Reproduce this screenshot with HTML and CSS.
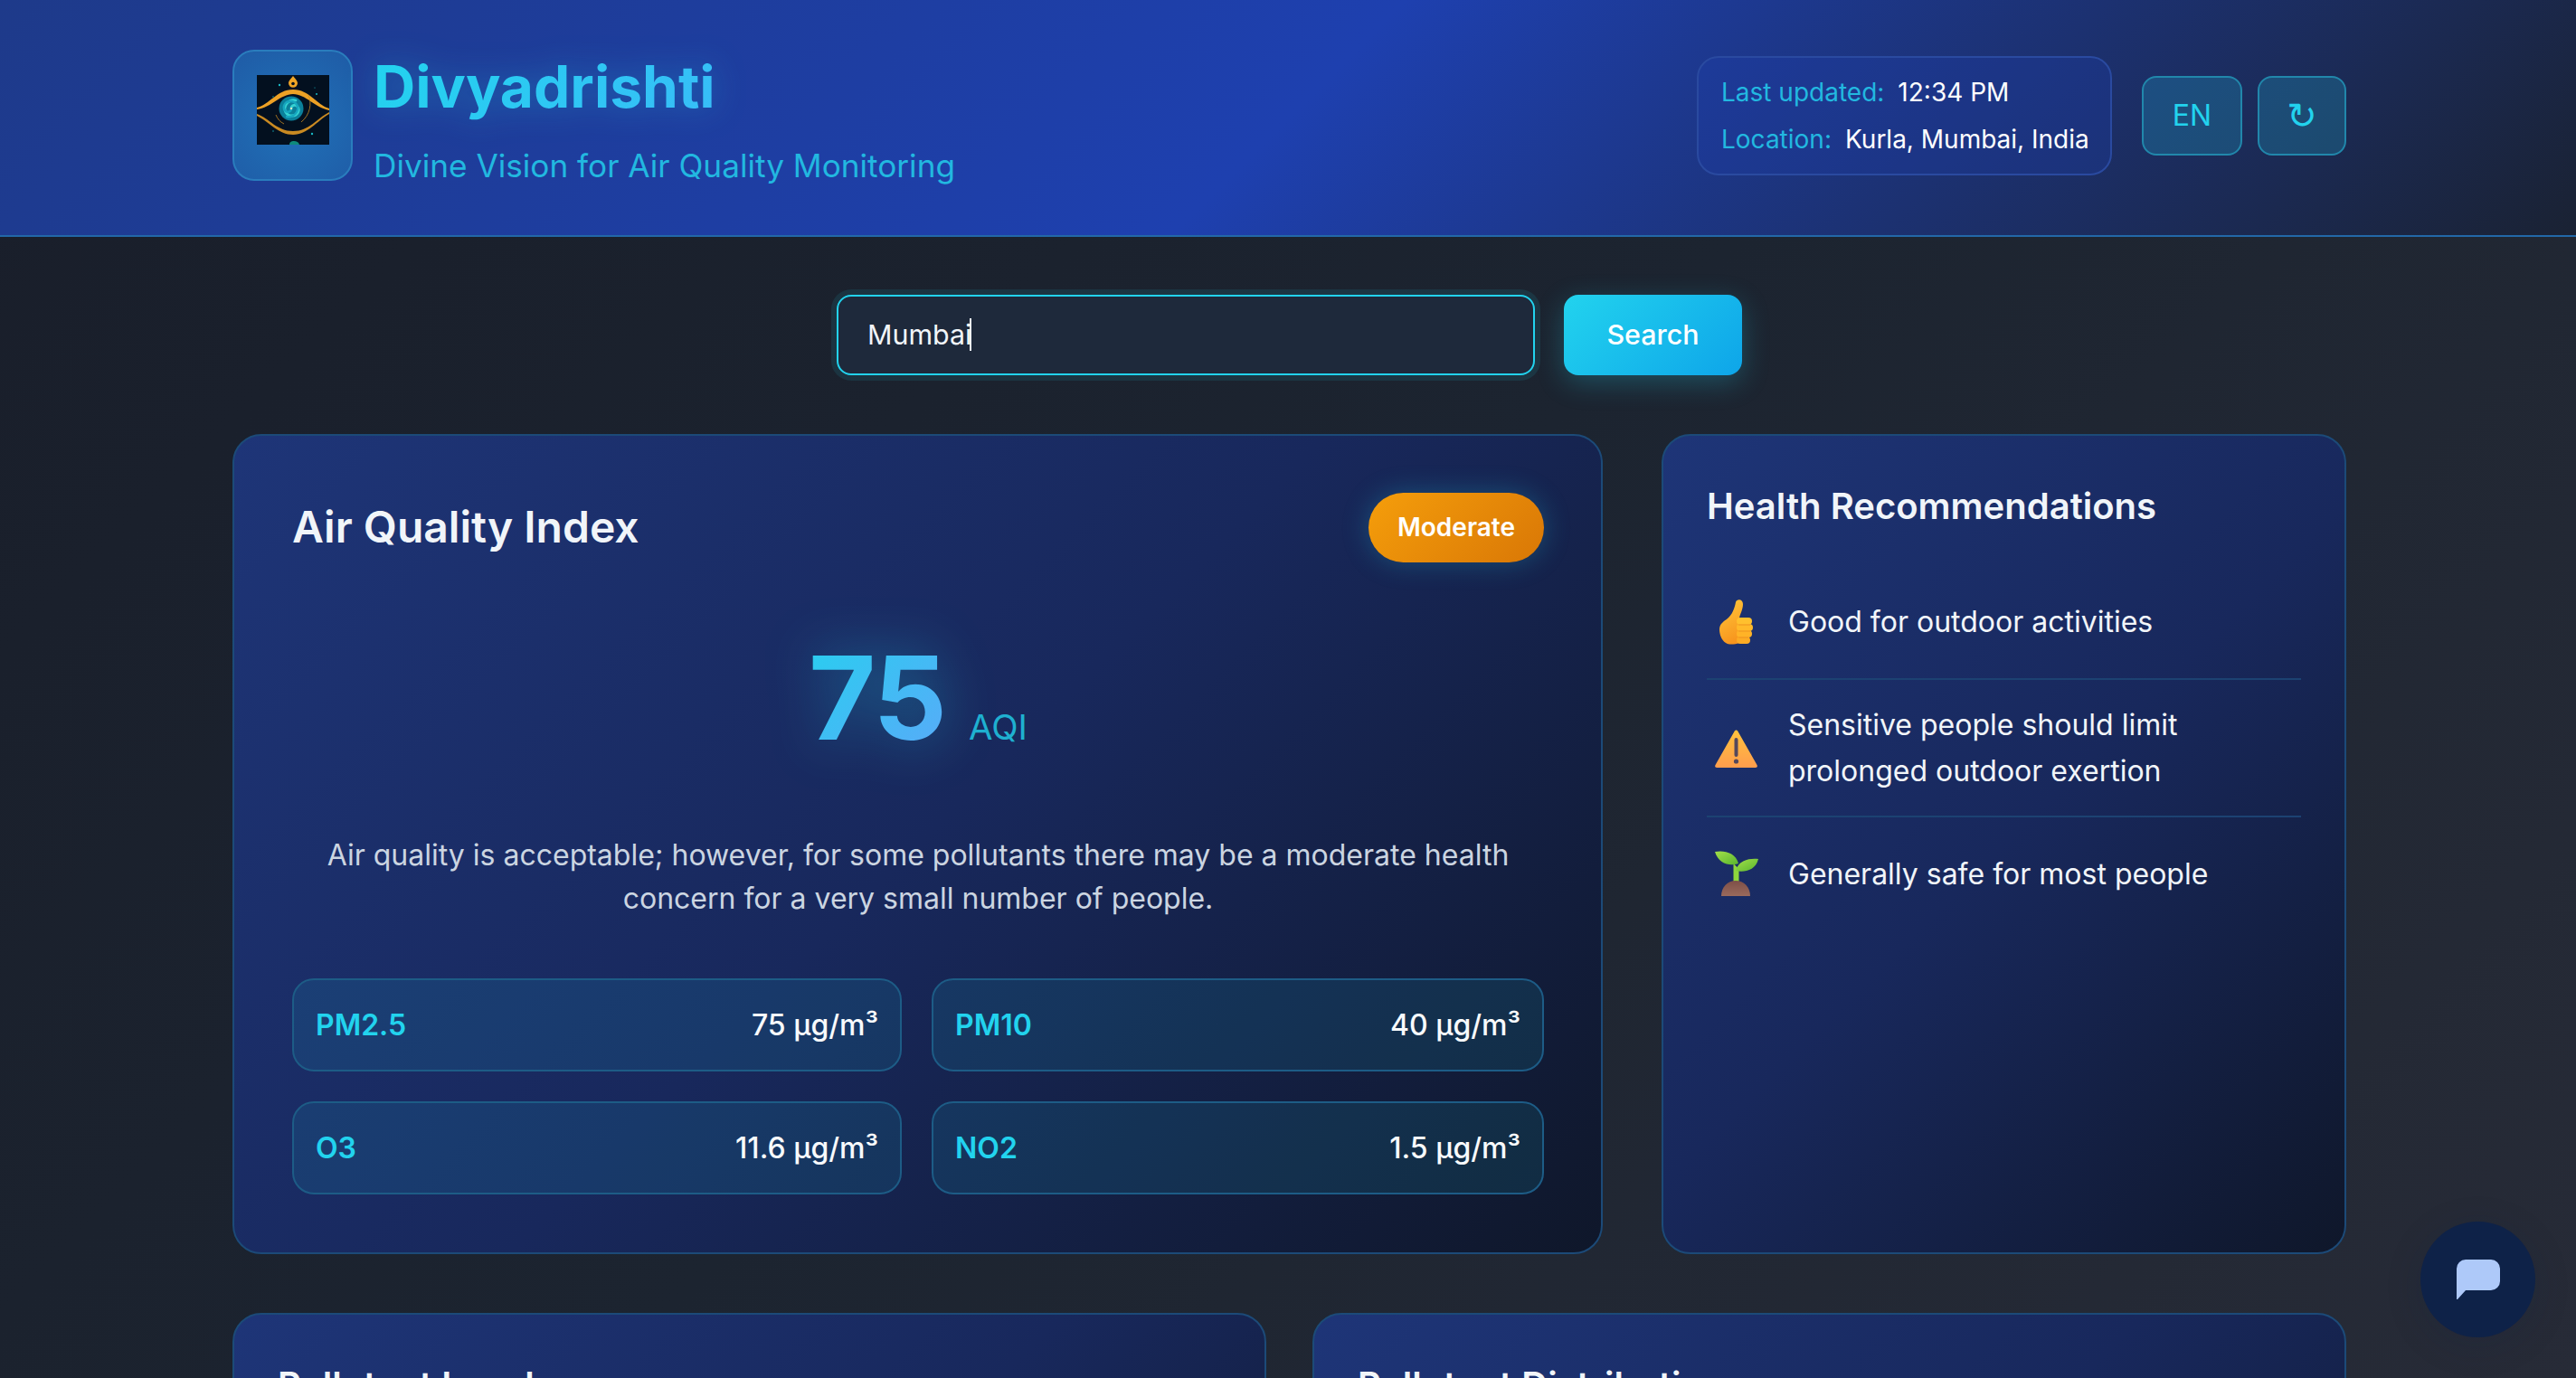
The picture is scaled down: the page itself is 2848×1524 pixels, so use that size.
FILE: index.html
```html
<!DOCTYPE html>
<html lang="en">
<head>
  <meta charset="UTF-8" />
  <title>Divyadrishti</title>
  <link rel="stylesheet" href="styles.css">
</head>
<body>
<header class="site-header">
  <div class="header-inner">
    <div class="brand">
      <div class="logo-box">
        <svg class="logo" viewBox="0 0 80 77" width="80" height="77" role="img" aria-label="Divyadrishti logo">
          <rect width="80" height="77" fill="#03101f"/>
          <g fill="#19b8c4">
            <circle cx="25" cy="11" r="1.200"/><circle cx="66" cy="21" r="1"/><circle cx="61" cy="65" r="1.200"/>
            <circle cx="18" cy="24" r=".7"/><circle cx="64" cy="14" r=".6"/><circle cx="18" cy="62" r=".7"/>
            <path d="M36 77c0-3 2-4 5-4s5 1 6 4z" fill="#0f8a7c"/>
          </g>
          <path d="M40 1c2 3 5 5 5 8a5 4.800 0 0 1-10 0c0-3 3-5 5-8z" fill="#f0a526"/>
          <circle cx="40" cy="9.500" r="1.800" fill="#03101f"/>
          <path d="M0 36C14 33 22 16 40 16s26 17 40 21v2C64 36 54 21 40 21S16 36 0 38z" fill="#eda125"/>
          <path d="M0 43C14 48 22 62 40 62s26-14 40-21v2C66 51 56 66 40 66S14 52 0 45z" fill="#c98a22"/>
          <circle cx="38" cy="37" r="13.500" fill="#0b7f9a"/>
          <g fill="none" stroke-linecap="round">
            <path d="M38 37c0-4 5-5 7-2 3 4 0 10-6 10-7 0-10-7-7-12 2-4 7-6 11-5" stroke="#35d2d2" stroke-width="2.800"/>
            <path d="M38 37c0-4 5-5 7-2 3 4 0 10-6 10-7 0-10-7-7-12 2-4 7-6 11-5" stroke="#16a6c0" stroke-width="2.400" transform="rotate(180 38 37)"/>
          </g>
          <circle cx="38" cy="37" r="1.200" fill="#d8e8c8"/>
          <path d="M57 22c4 9 2 22-8 30M21 44c2 5 5 8 9 10" fill="none" stroke="#c98a22" stroke-width=".800"/>
        </svg>
      </div>
      <div class="brand-text">
        <h1 class="brand-title"><span>Divyadrishti</span></h1>
        <p class="brand-sub">Divine Vision for Air Quality Monitoring</p>
      </div>
    </div>
    <div class="header-right">
      <div class="info-box">
        <div class="info-row"><span class="info-label">Last updated:</span><span class="info-value">12:34 PM</span></div>
        <div class="info-row"><span class="info-label">Location:</span><span class="info-value">Kurla, Mumbai, India</span></div>
      </div>
      <button class="tool-btn lang-btn">EN</button>
      <button class="tool-btn refresh-btn">↻</button>
    </div>
  </div>
</header>

<main class="content">
  <form class="search-row">
    <div class="search-box">
      <input class="search-input" type="text" value="Mumbai">
      <span class="search-caret"></span>
    </div>
    <button class="search-btn" type="button">Search</button>
  </form>

  <div class="top-grid">
    <section class="card aqi-card">
      <div class="aqi-head">
        <h2 class="aqi-title">Air Quality Index</h2>
        <span class="badge">Moderate</span>
      </div>
      <div class="aqi-value">
        <span class="aqi-number">75</span>
        <span class="aqi-unit">AQI</span>
      </div>
      <p class="aqi-desc">Air quality is acceptable; however, for some pollutants there may be a moderate health concern for a very small number of people.</p>
      <div class="metric-grid">
        <div class="metric"><span class="metric-name">PM2.5</span><span class="metric-val">75 µg/m³</span></div>
        <div class="metric"><span class="metric-name">PM10</span><span class="metric-val">40 µg/m³</span></div>
        <div class="metric"><span class="metric-name">O3</span><span class="metric-val">11.6 µg/m³</span></div>
        <div class="metric"><span class="metric-name">NO2</span><span class="metric-val">1.5 µg/m³</span></div>
      </div>
    </section>

    <section class="card rec-card">
      <h2 class="card-title">Health Recommendations</h2>
      <ul class="rec-list">
        <li class="rec-item">
          <svg class="rec-icon" viewBox="0 0 66 66" width="66" height="66" aria-hidden="true">
            <defs>
              <linearGradient id="thumbFill" x1="0.2" y1="0" x2="0.5" y2="1">
                <stop offset="0" stop-color="#ffc63a"/><stop offset="1" stop-color="#f7941d"/>
              </linearGradient>
            </defs>
            <path d="M32 11c1-4 8-4 8 2 0 6-3 11-4 15v28c-6 2-12 2-15 0-5-3-7-10-7-15 0-6 5-9 9-12 5-4 8-12 9-18z" fill="url(#thumbFill)"/>
            <rect x="33" y="28" width="17" height="8" rx="4" fill="#ffc02e"/>
            <rect x="33" y="35" width="18" height="8" rx="4" fill="#ffb92a"/>
            <rect x="33" y="42" width="17" height="8" rx="4" fill="#ffb327"/>
            <rect x="33" y="49" width="15" height="8" rx="4" fill="#fdab24"/>
            <path d="M35 36h13M35 43h13M35 50h11" stroke="#ee9420" stroke-width="1"/>
          </svg>
          <span>Good for outdoor activities</span>
        </li>
        <li class="rec-item">
          <svg class="rec-icon" viewBox="0 0 66 66" width="66" height="66" aria-hidden="true">
            <defs>
              <linearGradient id="warnFill" x1="0.5" y1="0" x2="0.5" y2="1">
                <stop offset="0" stop-color="#ffc23d"/><stop offset="1" stop-color="#ff9d4d"/>
              </linearGradient>
            </defs>
            <path d="M30.500 15c1-2 3-2 4 0l21 37c1 2 0 3-2 3H11.500c-2 0-3-1-2-3z" fill="url(#warnFill)"/>
            <path d="M32.500 24v17" stroke="#55485c" stroke-width="4" stroke-linecap="round"/>
            <circle cx="32.500" cy="48" r="2.600" fill="#55485c"/>
          </svg>
          <span>Sensitive people should limit prolonged outdoor exertion</span>
        </li>
        <li class="rec-item">
          <svg class="rec-icon" viewBox="0 0 66 66" width="66" height="66" aria-hidden="true">
            <defs>
              <linearGradient id="leafFill" x1="0" y1="0" x2="1" y2="1">
                <stop offset="0" stop-color="#a4e04a"/><stop offset="1" stop-color="#58b52e"/>
              </linearGradient>
              <linearGradient id="soilFill" x1="0.5" y1="0" x2="0.5" y2="1">
                <stop offset="0" stop-color="#7d4f48"/><stop offset="1" stop-color="#9a6a5c"/>
              </linearGradient>
            </defs>
            <path d="M29.500 22v21h6V28z" fill="#8ed63c"/>
            <path d="M9 9c10-2 23 1 26 13-9 3-22 1-26-13z" fill="url(#leafFill)"/>
            <path d="M57 17c-9-1-22 1-25 13 9 2 22 0 25-13z" fill="url(#leafFill)"/>
            <path d="M16 58c0-10 7-17 16-17s16 7 16 17c0 0-32 0-32 0z" fill="url(#soilFill)"/>
          </svg>
          <span>Generally safe for most people</span>
        </li>
      </ul>
    </section>
  </div>

  <div class="bottom-grid">
    <section class="card chart-card"><h2 class="card-title">Pollutant Levels</h2></section>
    <section class="card chart-card"><h2 class="card-title">Pollutant Distribution</h2></section>
  </div>
</main>

<button class="chat-btn" aria-label="Open chat">
  <svg viewBox="0 0 48 44" width="48" height="44" aria-hidden="true">
    <path d="M10 0h28a10 10 0 0 1 10 10v14a10 10 0 0 1-10 10H10L1 44H0V10A10 10 0 0 1 10 0z" fill="#aec9f9"/>
  </svg>
</button>
</body>
</html>
```

FILE: styles.css
```css
* {
    box-sizing: border-box;
}

html, body {
    margin: 0;
    padding: 0;
}

body {
    font-family: Inter, "Noto Sans", sans-serif;
    font-size: 32px;
    line-height: 1.6;
    color: #f1f5f9;
    background: linear-gradient(135deg, #191e2a 0%, #1c2430 50%, #272b37 100%) fixed;
}

h1, h2, p, ul {
    margin: 0;
    padding: 0;
}

/* header */
.site-header {
    height: 262px;
    background: linear-gradient(135deg, #1e3a8a 0%, #1e40af 50%, #1a2233 100%);
    border-bottom: 2px solid #2268a8;
}

.header-inner {
    width: 2337px;
    margin-left: 257px;
    height: 260px;
    padding-bottom: 5px;
    display: flex;
    align-items: center;
    justify-content: space-between;
}

.brand {
    display: flex;
    align-items: center;
    gap: 23px;
}

.logo-box {
    width: 133px;
    height: 145px;
    padding: 26px 25px 0;
    border: 2px solid #2a7dbd;
    border-radius: 24px;
    background: radial-gradient(circle at 50% 55%, #2072b8, #1f5ba6);
}

.logo {
    display: block;
}

.brand-title {
    font-size: 64px;
    font-weight: 700;
    line-height: 102px;
}

.brand-title span {
    background: linear-gradient(135deg, #22d3ee, #38bdf8);
    -webkit-background-clip: text;
    background-clip: text;
    color: transparent;
    filter: drop-shadow(0 0 18px rgba(34, 211, 238, 0.3));
}

.brand-sub {
    margin-top: 8px;
    font-size: 35.2px;
    line-height: 56px;
    color: #22b8e0;
}

.header-right {
    display: flex;
    align-items: center;
    gap: 17px;
}

.info-box {
    width: 459px;
    height: 132px;
    margin-right: 16px;
    padding: 12px 25px;
    border: 2px solid #2a4aa0;
    border-radius: 24px;
    background: rgba(30, 64, 175, 0.3);
    font-size: 28px;
    line-height: 52px;
}

.info-row {
    display: flex;
    gap: 15px;
    white-space: nowrap;
}

.info-label {
    color: #22b8e0;
}

.info-value {
    color: #ffffff;
}

.tool-btn {
    height: 88px;
    padding: 0;
    border: 2px solid #2187ab;
    border-radius: 16px;
    background: rgba(34, 211, 238, 0.2);
    color: #22d3ee;
    font-family: inherit;
    font-size: 32px;
}

.lang-btn {
    width: 111px;
}

.refresh-btn {
    width: 98px;
    font-family: "DejaVu Sans", sans-serif;
    font-size: 40px;
}

/* search */
.content {
    width: 2337px;
    margin-left: 257px;
}

.search-row {
    display: flex;
    justify-content: center;
    gap: 32px;
    margin-top: 64px;
    margin-bottom: 65px;
}

.search-box {
    position: relative;
    width: 772px;
    height: 89px;
}

.search-input {
    width: 100%;
    height: 100%;
    padding: 0 32px 2px;
    border: 2px solid #22d3ee;
    border-radius: 16px;
    outline: none;
    background: #1e293b;
    box-shadow: 0 0 0 6px rgba(34, 211, 238, 0.1);
    color: #f1f5f9;
    font-family: inherit;
    font-size: 30.4px;
}

/* blinking caret does not show in a still, so it is drawn */
.search-caret {
    position: absolute;
    left: 147px;
    top: 26px;
    width: 2px;
    height: 36px;
    background: #f1f5f9;
}

.search-btn {
    width: 197px;
    height: 89px;
    padding: 0 0 2px;
    border: none;
    border-radius: 16px;
    background: linear-gradient(135deg, #22d3ee, #0ea5e9);
    box-shadow: 0 8px 30px rgba(34, 211, 238, 0.25);
    color: #ffffff;
    font-family: inherit;
    font-size: 30.4px;
    font-weight: 500;
}

/* cards */
.card {
    border: 2px solid #1c4a78;
    border-radius: 32px;
    background: linear-gradient(135deg, #1e3578 0%, #18285c 50%, #0f172a 100%);
}

.top-grid {
    display: grid;
    grid-template-columns: 1515px 1fr;
    gap: 65px;
}

.aqi-card {
    height: 907px;
    padding: 63px 63px 64px 64px;
}

.aqi-head {
    display: flex;
    align-items: center;
    justify-content: space-between;
}

.aqi-title {
    padding-bottom: 2px;
    font-size: 48px;
    font-weight: 600;
    line-height: 75px;
}

.badge {
    height: 77px;
    padding: 16px 32px;
    border-radius: 50px;
    background: linear-gradient(135deg, #f59e0b, #d97706);
    box-shadow: 0 0 30px rgba(34, 211, 238, 0.25);
    color: #ffffff;
    font-size: 28px;
    font-weight: 600;
    line-height: 45px;
}

.aqi-value {
    display: flex;
    justify-content: center;
    align-items: baseline;
    gap: 26px;
    margin-top: 48px;
    margin-bottom: 16px;
    line-height: 204px;
}

.aqi-number {
    font-size: 128px;
    font-weight: 700;
    letter-spacing: -2px;
    background: linear-gradient(135deg, #22d3ee, #60a5fa);
    -webkit-background-clip: text;
    background-clip: text;
    color: transparent;
    filter: drop-shadow(0 0 30px rgba(34, 211, 238, 0.4));
}

.aqi-unit {
    font-size: 38.4px;
    color: #1fb0d0;
}

.aqi-desc {
    padding: 0 16px;
    margin-bottom: 64px;
    color: #cbd5e1;
    font-size: 32px;
    line-height: 48px;
    text-align: center;
}

.metric-grid {
    display: grid;
    grid-template-columns: 674px 1fr;
    gap: 33px;
}

.metric {
    height: 103px;
    padding: 0 24px;
    display: flex;
    align-items: center;
    justify-content: space-between;
    border: 2px solid #1d5c86;
    border-radius: 24px;
    background: rgba(34, 211, 238, 0.1);
}

.metric-name {
    color: #22d3ee;
    font-weight: 600;
}

.metric-val {
    color: #f8fafc;
    font-weight: 500;
}

.rec-card {
    padding: 48px;
}

.card-title {
    font-size: 40px;
    font-weight: 600;
    line-height: 60px;
}

.rec-list {
    list-style: none;
    margin-top: 36px;
}

.rec-item {
    display: flex;
    align-items: center;
    gap: 24px;
    padding: 24px 0;
    border-bottom: 2px solid #1c4272;
}

.rec-item:last-child {
    border-bottom: none;
}

.rec-icon {
    flex: none;
    margin: 5px 0;
}

.rec-item:nth-child(2) .rec-icon {
    margin: 0;
}

.bottom-grid {
    display: grid;
    grid-template-columns: 1fr 1fr;
    gap: 51px;
    margin-top: 65px;
    margin-bottom: 64px;
}

.chart-card {
    height: 700px;
    padding: 48px;
}

/* chat bubble stays over the page */
.chat-btn {
    position: fixed;
    right: 45px;
    bottom: 45px;
    width: 127px;
    height: 128px;
    display: flex;
    align-items: center;
    justify-content: center;
    padding: 0;
    border: none;
    border-radius: 50%;
    background: #0e2248;
    box-shadow: 0 8px 40px rgba(14, 34, 72, 0.15);
}
```
